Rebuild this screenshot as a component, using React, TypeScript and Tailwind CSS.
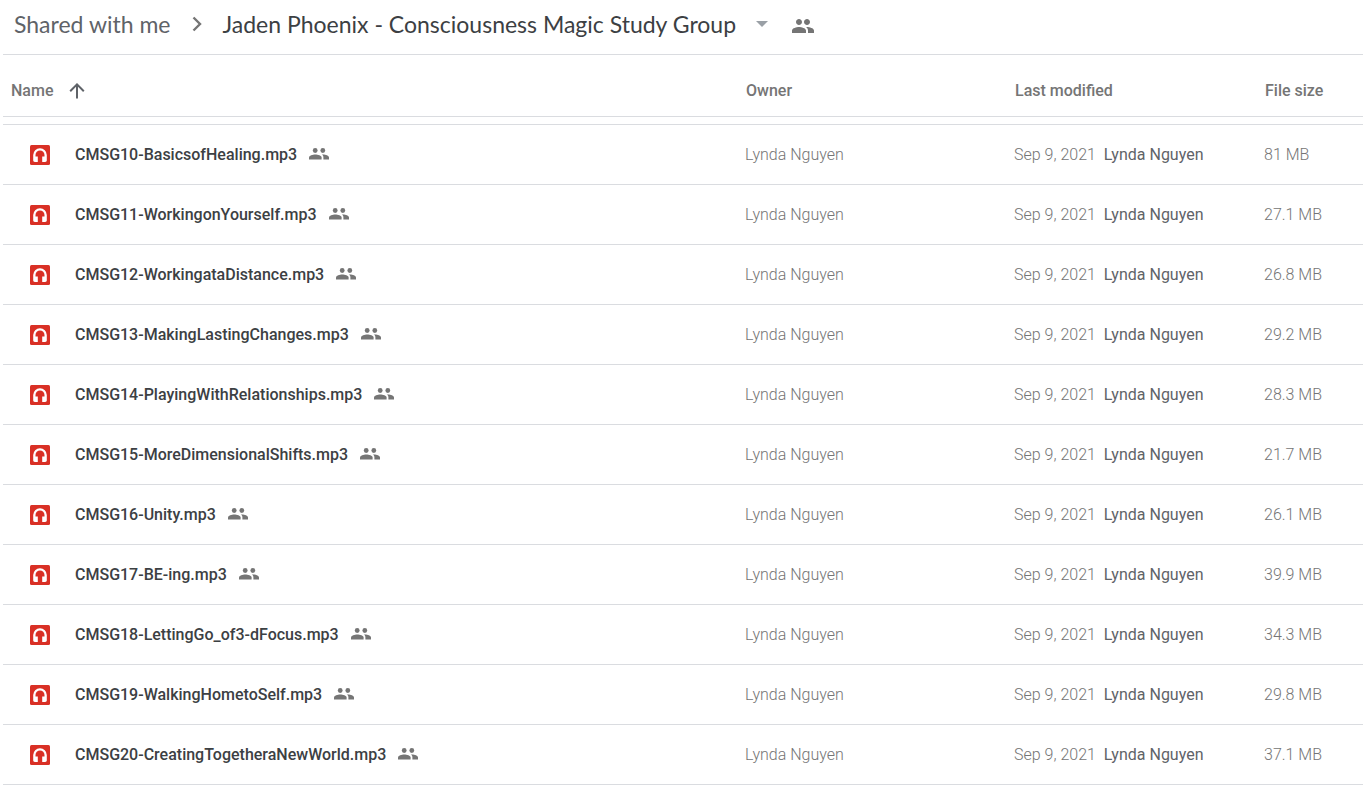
import { MdPeople } from 'react-icons/md';

const OWNER = 'Lynda Nguyen';

const files = [
  { name: 'CMSG10-BasicsofHealing.mp3', size: '81 MB' },
  { name: 'CMSG11-WorkingonYourself.mp3', size: '27.1 MB' },
  { name: 'CMSG12-WorkingataDistance.mp3', size: '26.8 MB' },
  { name: 'CMSG13-MakingLastingChanges.mp3', size: '29.2 MB' },
  { name: 'CMSG14-PlayingWithRelationships.mp3', size: '28.3 MB' },
  { name: 'CMSG15-MoreDimensionalShifts.mp3', size: '21.7 MB' },
  { name: 'CMSG16-Unity.mp3', size: '26.1 MB' },
  { name: 'CMSG17-BE-ing.mp3', size: '39.9 MB' },
  { name: 'CMSG18-LettingGo_of3-dFocus.mp3', size: '34.3 MB' },
  { name: 'CMSG19-WalkingHometoSelf.mp3', size: '29.8 MB' },
  { name: 'CMSG20-CreatingTogetheraNewWorld.mp3', size: '37.1 MB' },
];

function AudioIcon() {
  return (
    <svg viewBox="0 0 20 20" className="size-5 shrink-0" aria-hidden="true">
      <rect width="20" height="20" rx="1.5" fill="#d93025" />
      <path
        d="M10 3.2A6.8 6.8 0 0 0 3.2 10v5.2c0 1 .7 1.700 1.700 1.700h2.900v-5.400H5.500V10a4.500 4.500 0 0 1 9 0v1.500h-2.300v5.400h2.900c1 0 1.700-.7 1.700-1.700V10A6.800 6.800 0 0 0 10 3.200z"
        fill="#fff"
      />
    </svg>
  );
}

function SharedIcon() {
  return (
    <svg viewBox="0 0 20 14" className="h-[14px] w-5 shrink-0" fill="#757575" aria-hidden="true">
      <circle cx="6.200" cy="2.500" r="2.400" />
      <circle cx="13.800" cy="2.500" r="2.400" />
      <path d="M0 11.500V9.500C0 7.600 3.700 6.500 6.300 6.500s6.300 1.100 6.300 3v2z" />
      <path d="M12.900 6.600c1 .7 1.500 1.700 1.500 2.900v2H20v-2c0-1.900-3.400-3-5.900-3z" />
    </svg>
  );
}

export default function App() {
  return (
    <main className="overflow-hidden bg-white pl-[3px] font-[Roboto,sans-serif] text-base text-[#757575]">
      <nav
        aria-label="Breadcrumb"
        className="flex h-[55px] items-center border-b border-[#dadce0] pb-[6px] pl-[11px] font-[Lato,sans-serif] text-[23px] leading-8"
      >
        <a href="#shared" className="text-[#5f6368]">
          Shared with me
        </a>
        <svg viewBox="0 0 10 16" className="mx-[21px] h-4 w-[10px]" fill="none" aria-hidden="true">
          <path d="M1.500 1.500 8 8l-6.500 6.500" stroke="#757575" strokeWidth="2.400" />
        </svg>
        <button type="button" className="flex items-center gap-5 text-[#3c4043]">
          Jaden Phoenix - Consciousness Magic Study Group
          <svg viewBox="0 0 12 6" className="h-[6px] w-3" fill="#9aa0a6" aria-hidden="true">
            <path d="M0 0h12L6 6z" />
          </svg>
        </button>
        <button type="button" aria-label="Manage access" className="ml-[23px] mt-1">
          <MdPeople className="size-6" color="#757575" />
        </button>
      </nav>

      <table className="w-full table-fixed border-separate border-spacing-0 text-left">
        <colgroup>
          <col />
          <col className="w-[269px]" />
          <col className="w-[250px]" />
          <col className="w-[100px]" />
        </colgroup>
        <thead>
          <tr className="h-[62px] [&>th]:border-b [&>th]:border-[#dadce0] [&>th]:pt-[10px] [&>th]:font-medium">
            <th scope="col" aria-sort="ascending" className="pl-2">
              <button type="button" className="flex items-center gap-4">
                Name
                <svg viewBox="0 0 16 16" className="size-4" fill="none" aria-hidden="true">
                  <path d="M8 15.500V1.500M1.200 8.200 8 1.400l6.800 6.800" stroke="#5f6368" strokeWidth="2" />
                </svg>
              </button>
            </th>
            <th scope="col" className="pl-[2px]">
              Owner
            </th>
            <th scope="col" className="pl-[2px]">
              Last modified
            </th>
            <th scope="col" className="pl-[2px]">
              File size
            </th>
          </tr>
        </thead>
        <tbody>
          <tr className="h-2">
            <td colSpan={4} className="border-b border-[#dadce0] p-0" />
          </tr>
          {files.map((file) => (
            <tr
              key={file.name}
              className="h-[60px] [&>td]:border-b [&>td]:border-[#dadce0] [&>td]:font-light [&>td]:whitespace-nowrap"
            >
              <td className="pl-[27px]">
                <div className="flex items-center">
                  <AudioIcon />
                  <span className="mr-3 ml-[25px] font-medium text-[#3c4043]">{file.name}</span>
                  <SharedIcon />
                </div>
              </td>
              <td className="pl-px">{OWNER}</td>
              <td className="pl-px">
                Sep 9, 2021 <span className="ml-1 font-normal text-[#5f6368]">{OWNER}</span>
              </td>
              <td className="pl-px">{file.size}</td>
            </tr>
          ))}
        </tbody>
      </table>
    </main>
  );
}
